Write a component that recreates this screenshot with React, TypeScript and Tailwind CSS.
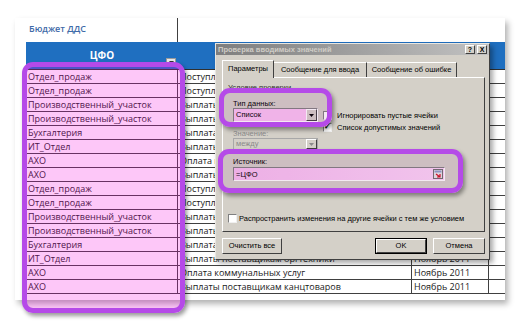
import { FC, ReactNode } from "react";

// Rows of the budget sheet: department and cash-flow item
const pattern: [string, string][] = [
	["Отдел_продаж", "Поступления от покупателей"],
	["Отдел_продаж", "Поступления от покупателей"],
	["Производственный_участок", "Выплаты поставщикам сырья"],
	["Производственный_участок", "Выплаты заработной платы"],
	["Бухгалтерия", "Выплата налогов"],
	["ИТ_Отдел", "Выплаты поставщикам оргтехники"],
	["АХО", "Оплата коммунальных услуг"],
	["АХО", "Выплаты поставщикам канцтоваров"],
];
const rows = [...pattern, ...pattern];

const cols = "grid grid-cols-[152px_234px_77px_16px]";

// Sunken checkbox
const CheckBox: FC<{ checked?: boolean }> = ({ checked }) => (
	<span className="w-[9px] h-[9px] shrink-0 bg-white border border-t-[#808080] border-l-[#808080] border-r-[#f0f0f0] border-b-[#f0f0f0] flex items-center justify-center text-[8px] leading-none font-bold text-black">
		{checked ? "✓" : ""}
	</span>
);

// Raised button
const Button: FC<{ width: string; isDefault?: boolean; children: ReactNode }> = ({ width, isDefault, children }) => (
	<div className={`${width} h-[16px] ${isDefault ? "border border-black" : ""}`}>
		<div className="w-full h-full flex items-center justify-center bg-[#d4d0c8] border border-t-white border-l-white border-r-[#404040] border-b-[#404040] text-[7.5px] text-black">
			{children}
		</div>
	</div>
);

const Arrow: FC<{ disabled?: boolean }> = ({ disabled }) => (
	<span className="w-[11px] h-full bg-[#d4d0c8] border border-t-white border-l-white border-r-[#404040] border-b-[#404040] flex items-center justify-center">
		<svg width="5" height="3" viewBox="0 0 5 3">
			<path d="M0 0h5L2.5 3z" fill={disabled ? "#8a8a8a" : "#000"} />
		</svg>
	</span>
);

// Excel data validation dialog
const ValidationDialog: FC = () => (
	<div className="absolute left-[215px] top-[43px] w-[275px] h-[217px] bg-[#d4d0c8] border border-t-[#e8e6e0] border-l-[#e8e6e0] border-r-[#404040] border-b-[#404040] shadow-[3px_3px_5px_rgba(0,0,0,0.35)] flex flex-col font-['Liberation_Sans',Arial,sans-serif] text-black">
		{/* Title bar */}
		<div className="h-[11px] flex items-center justify-between pl-[2px] pr-[2px] bg-gradient-to-r from-[#7e7e7e] to-[#c2c2c2]">
			<span className="text-[7.5px] font-bold text-[#cfccc6] leading-none">Проверка вводимых значений</span>
			<div className="flex gap-[2px]">
				<span className="w-[10px] h-[9px] bg-[#d4d0c8] border border-t-white border-l-white border-r-[#404040] border-b-[#404040] flex items-center justify-center text-[7px] font-bold leading-none">?</span>
				<span className="w-[10px] h-[9px] bg-[#d4d0c8] border border-t-white border-l-white border-r-[#404040] border-b-[#404040] flex items-center justify-center text-[7px] font-bold leading-none">X</span>
			</div>
		</div>

		{/* Tabs */}
		<div className="mt-[5px] pl-[6px] flex items-end h-[17px] text-[7.5px]">
			<div className="relative z-10 w-[52px] h-[18px] -mb-[1px] bg-[#d4d0c8] border-t border-l border-r border-t-white border-l-white border-r-[#404040] flex items-center justify-center pb-[1px]">
				Параметры
			</div>
			<div className="w-[93px] h-[15px] border-t border-r border-t-white border-r-[#404040] flex items-center justify-center">
				Сообщение для ввода
			</div>
			<div className="w-[90px] h-[15px] border-t border-r border-t-white border-r-[#404040] flex items-center justify-center">
				Сообщение об ошибке
			</div>
		</div>

		{/* Tab panel */}
		<div className="ml-[6px] w-[263px] h-[155px] border border-t-white border-l-white border-r-[#404040] border-b-[#404040] pt-[5px] pl-[5px] pb-[8px] flex flex-col text-[7.5px] leading-[9px]">
			<div className="h-[9px] text-[#303030]">Условие проверки</div>
			<div className="ml-[5px] mt-[7px] flex">
				<div className="w-[85px] flex flex-col">
					<div className="h-[9px]">Тип данных:</div>
					<div className="h-[14px] flex bg-[#fbc3f3] border border-t-[#808080] border-l-[#808080] border-r-white border-b-white">
						<span className="flex-1 pl-[2px] leading-[12px]">Список</span>
						<Arrow />
					</div>
					<div className="h-[9px] mt-[7px] text-[#8a8a8a]">Значение:</div>
					<div className="h-[12px] flex bg-[#d4d0c8] border border-[#a8a8a8]">
						<span className="flex-1 pl-[2px] leading-[10px] text-[#8a8a8a]">между</span>
						<Arrow disabled />
					</div>
				</div>
				<div className="ml-[5px] pt-[10px] flex flex-col">
					<div className="h-[12px] flex items-center gap-[5px]">
						<CheckBox />
						<span>Игнорировать пустые ячейки</span>
					</div>
					<div className="h-[12px] flex items-center gap-[5px]">
						<CheckBox checked />
						<span>Список допустимых значений</span>
					</div>
				</div>
			</div>
			<div className="ml-[5px] mt-[7px] h-[9px]">Источник:</div>
			<div className="ml-[5px] mt-[1px] w-[212px] h-[14px] flex items-center bg-gradient-to-r from-[#f8bff0] to-[#fcd6f8] border border-t-[#808080] border-l-[#808080] border-r-white border-b-white pr-[1px]">
				<span className="flex-1 pl-[2px]">=ЦФО</span>
				<svg width="10" height="10" viewBox="0 0 10 10">
					<rect x="0.5" y="0.5" width="9" height="9" fill="#e8e8e8" stroke="#707070" />
					<rect x="1.5" y="1.5" width="7" height="2" fill="#8aa0c8" />
					<path d="M3 5l4 3M7 5v3H4" stroke="#d01020" strokeWidth="1.2" fill="none" />
				</svg>
			</div>
			<div className="flex-1" />
			<div className="h-[9px] flex items-center gap-[2px]">
				<CheckBox />
				<span>Распространить изменения на другие ячейки с тем же условием</span>
			</div>
		</div>

		{/* Buttons */}
		<div className="mt-[6px] pl-[6px] flex">
			<Button width="w-[60px]">Очистить все</Button>
			<div className="flex-1" />
			<Button width="w-[52px]" isDefault>OK</Button>
			<div className="w-[6px]" />
			<Button width="w-[52px]">Отмена</Button>
			<div className="w-[4px]" />
		</div>
	</div>
);

const Highlight: FC<{ box: string; fill: string }> = ({ box, fill }) => (
	<div className={`absolute ${box} ${fill} rounded-[11px] border-[5px] border-[#b54ae8] shadow-[2px_3px_4px_rgba(0,0,0,0.4)] pointer-events-none`} />
);

export default function App() {
	return (
		<div className="relative w-[525px] h-[324px] overflow-hidden bg-white font-['Open_Sans',Arial,sans-serif]">
			{/* Sheet */}
			<div className="ml-[15px] mt-[18px] w-[490px] bg-white pl-[11px] pb-[6px] shadow-[3px_4px_6px_rgba(0,0,0,0.3)]">
				<div className={`${cols} h-[24px]`}>
					<div className="border-r border-[#404040] pl-[3px] pt-[4px] text-[9px] font-semibold text-[#3f6aa8]">Бюджет ДДС</div>
					<div />
					<div />
					<div />
				</div>
				<div className={`${cols} h-[28px] bg-[#1f6fc0] border-b border-[#303030]`}>
					<div className="relative flex items-center justify-center text-[10px] font-bold text-white">
						ЦФО
						<span className="absolute right-[2px] bottom-[3px] w-[10px] h-[8px] bg-[#e8e8e8] border border-[#9a9a9a] flex items-center justify-center">
							<svg width="5" height="3" viewBox="0 0 5 3"><path d="M0 0h5L2.5 3z" fill="#333" /></svg>
						</span>
					</div>
					<div />
					<div />
					<div />
				</div>
				{rows.map(([dept, item], index) => (
					<div key={`${dept}_${index}`} className={`${cols} h-[14px] text-[9px] leading-[13px] text-[#1a1a1a]`}>
						<div className="pl-[2px] border-b border-r border-[#404040] whitespace-nowrap overflow-hidden">{dept}</div>
						<div className="pl-[2px] border-b border-r border-[#404040] whitespace-nowrap overflow-hidden">{item}</div>
						<div className="pl-[2px] border-b border-r border-[#404040] whitespace-nowrap overflow-hidden">Ноябрь 2011</div>
						<div className="border-b border-[#404040]" />
					</div>
				))}
			</div>

			<Highlight box="left-[22px] top-[62px] w-[163px] h-[251px]" fill="bg-[rgba(245,0,225,0.22)]" />

			<ValidationDialog />

			<Highlight box="left-[219px] top-[88px] w-[113px] h-[39px]" fill="bg-[rgba(150,40,140,0.1)]" />
			<Highlight box="left-[218px] top-[149px] w-[245px] h-[44px]" fill="bg-[rgba(150,40,140,0.1)]" />
		</div>
	);
}
